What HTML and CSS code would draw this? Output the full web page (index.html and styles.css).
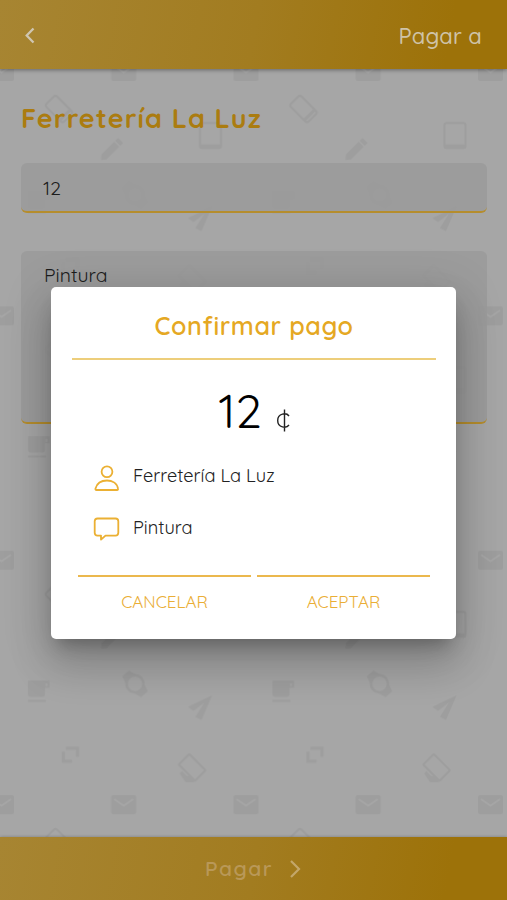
FILE: index.html
```html
<!DOCTYPE html>
<html lang="es">
<head>
<meta charset="utf-8">
<title>Pagar a</title>
<link rel="stylesheet" href="styles.css">
</head>
<body>
<div class="app">
  <svg class="wallpaper" aria-hidden="true">
    <defs>
      <pattern id="doodles" x="-20" y="49" width="244.5" height="244.4" patternUnits="userSpaceOnUse">
        <g id="mail" fill="#999"><rect x="9" y="13" width="25" height="19" rx="2"/><path d="M12 17l9.500 6.500L31 17" fill="none" stroke="#a6a6a6" stroke-width="2"/></g>
        <use href="#mail" x="122.200"/>
        <g transform="translate(79 60) rotate(-45)" fill="none" stroke="#999"><rect x="-7.500" y="-12.500" width="15" height="25" rx="2.500" stroke-width="2"/><path d="M-7 8.500H7" stroke-width="3"/></g>
        <g transform="translate(131 101) rotate(45)" fill="#999"><path d="M-3.500-8h7V10L0 14l-3.500-4zM-3.500-13.500h7v4h-7z"/></g>
        <g fill="none" stroke="#999"><rect x="220" y="74" width="21" height="25" rx="2" stroke-width="2"/><path d="M220 97.500h21" stroke-width="4"/></g>
        <g fill="#999"><path d="M48 143h21.500v7H65v6q0 3-3 3H51q-3 0-3-3zM48 162h18v2H48z"/><path d="M65.500 145.500h2v3h-2z" fill="#a6a6a6"/></g>
        <g transform="translate(155 146) rotate(-42)"><path d="M-4.500-14h9l2 7h-13zM-4.500 14h9l2-7h-13z" fill="#999"/><circle r="8.500" fill="#a6a6a6" stroke="#999" stroke-width="2.500"/></g>
        <path d="M208 169l24-11.500-10.500 24.500-6-3 9-14.500-11 8.500z" fill="#999"/>
        <path d="M86 209h13v10h-3v-7H86zM82 214h3v8h7v3H82z" fill="#999"/>
        <g transform="translate(212.500 230) rotate(-45)"><rect x="-7.500" y="-12" width="15" height="23" rx="1" fill="none" stroke="#999" stroke-width="2"/><path d="M-13-5h3v7l3 2v7h-4l-4-6z" fill="#999"/></g>
      </pattern>
    </defs>
    <rect width="100%" height="100%" fill="url(#doodles)"/>
  </svg>
  <header class="topbar">
    <svg width="12" height="18" viewBox="0 0 12 18"><path d="M9.500 1.500L2.700 8.500l6.800 7" fill="none" stroke="#cfc6b2" stroke-width="2.300"/></svg>
    <span class="topbar-title">Pagar a</span>
  </header>
  <main class="form">
    <h1 class="payee">Ferretería La Luz</h1>
    <div class="field amount-field">12</div>
    <div class="field note-field">Pintura</div>
  </main>
  <footer class="paybar">
    <span class="paybar-label">Pagar</span>
    <svg width="14" height="20" viewBox="0 0 14 20"><path d="M3 2l8 8-8 8" fill="none" stroke="#c3a76a" stroke-width="2.200"/></svg>
  </footer>
</div>
<div class="overlay">
  <section class="dialog">
    <h2 class="dialog-title">Confirmar pago</h2>
    <div class="total"><span class="total-value">12</span>
      <svg width="14" height="23" viewBox="0 0 14 23"><path d="M13 7C10.500 3.500 1.700 4 1.700 11.500S10.500 19.500 13 16M8.500.5v22" fill="none" stroke="#222" stroke-width="1.400"/></svg>
    </div>
    <div class="detail">
      <svg width="28" height="28" viewBox="0 0 28 28" fill="none" stroke="#ebb033" stroke-width="1.800"><circle cx="14" cy="7.800" r="5.400"/><path d="M3.500 26c-1 0-1.200-.7-1-1.500C4 19 9 16.500 14 16.500s10 2.500 11 8c.2.800 0 1.500-1 1.500z"/></svg>
      <span class="detail-text">Ferretería La Luz</span>
    </div>
    <div class="detail">
      <svg width="28" height="28" viewBox="0 0 28 28" fill="none" stroke="#ebb033" stroke-width="1.800" stroke-linejoin="round"><path d="M4.500 2.500h18q2.800 0 2.800 2.800v11.500q0 2.800-2.800 2.800H12.500l-4.500 4v-4H4.500q-2.800 0-2.800-2.800V5.300Q1.700 2.500 4.500 2.500z"/></svg>
      <span class="detail-text">Pintura</span>
    </div>
    <div class="actions">
      <button class="action">CANCELAR</button>
      <button class="action">ACEPTAR</button>
    </div>
  </section>
</div>
</body>
</html>
```
FILE: styles.css
```css
* { box-sizing: border-box; }
body { margin: 0; font-family: Quicksand, Lato, sans-serif; color: #222; }
h1, h2 { margin: 0; }
svg { display: block; flex: none; }
.app { position: relative; display: flex; flex-direction: column; width: 507px; height: 900px; background: #a6a6a6; overflow: hidden; }
.wallpaper { position: absolute; inset: 0; width: 100%; height: 100%; opacity: .6; }
.topbar, .paybar { position: relative; display: flex; flex: none; align-items: center; background: linear-gradient(100deg, #a78532, #a27c20 50%, #9d7209 88%); }
.topbar { height: 69px; justify-content: space-between; padding: 2px 25px 0 24px; box-shadow: 0 1px 4px rgba(0,0,0,.4); }
.topbar-title { font-size: 22px; line-height: 28px; letter-spacing: .2px; font-weight: 500; color: #cfc3a8; }
.form { position: relative; flex: 1; padding: 32px 20px 0 21px; }
.payee { height: 34px; font-size: 27px; line-height: 34px; letter-spacing: 1.07px; color: #ab7c10; white-space: nowrap; }
.field { border-radius: 6px; border-bottom: 2px solid #b58d2d; background: rgba(154,154,154,.85); font-size: 19.400px; color: #1c1c1c; }
.amount-field { height: 50px; margin-top: 28px; padding: 0 22px; line-height: 50px; }
.note-field { height: 173px; margin-top: 38px; padding: 11px 23px; line-height: 26px; }
.paybar { height: 63px; justify-content: center; gap: 15px; box-shadow: 0 0 3px rgba(0,0,0,.25); }
.paybar-label { font-size: 21px; font-weight: 600; line-height: 26px; letter-spacing: 1.500px; color: #b99858; margin-bottom: 1px; }
.overlay { position: absolute; inset: 0; display: flex; justify-content: center; align-items: flex-start; width: 507px; height: 900px; padding-top: 287px; }
.dialog { width: 405px; height: 352px; padding: 21px 20px 0 21px; border-radius: 5px; background: #fff; box-shadow: 0 12px 16px -7px rgba(0,0,0,.25), 0 25px 40px 3px rgba(0,0,0,.16), 0 9px 46px 8px rgba(0,0,0,.1); }
.dialog-title { height: 52px; border-bottom: 2px solid #edce7b; color: #e5a823; font-size: 25px; font-weight: 600; line-height: 36px; letter-spacing: .620px; text-align: center; }
.total { display: flex; align-items: flex-end; justify-content: center; gap: 14px; height: 72px; color: #000; }
.total-value { font-size: 47px; font-weight: 400; line-height: 42px; }
.detail { display: flex; gap: 12px; height: 52px; padding: 0 20px 0 21px; }
.total + .detail { margin-top: 32px; }
.detail-text { line-height: 24px; font-size: 18.200px; }
.actions { display: flex; gap: 6px; padding: 0 6px; margin-top: 7px; }
.action { flex: 1; height: 50px; padding: 1px 0 0; border: 0; border-top: 2px solid #ebb84e; background: none; font-family: inherit; font-size: 17px; color: #eaae36; }
```
